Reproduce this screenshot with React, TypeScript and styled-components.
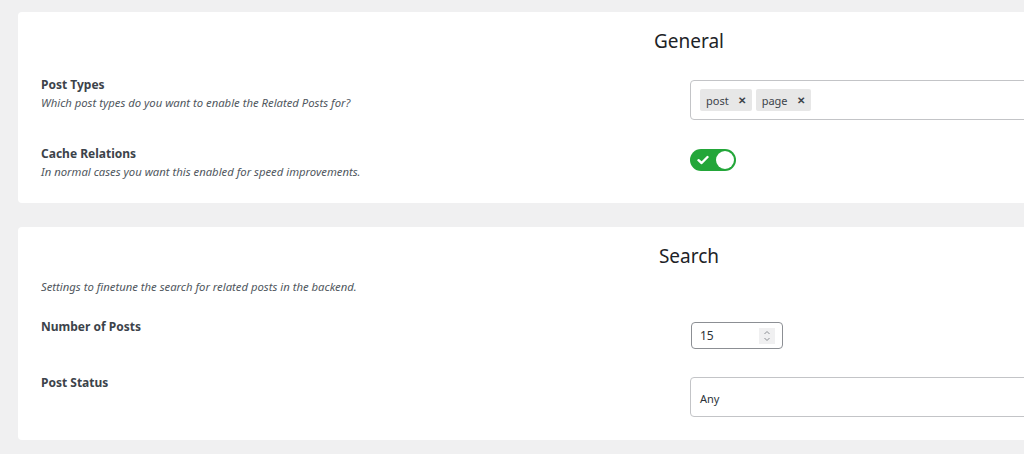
import React from "react"
import styled, { createGlobalStyle } from "styled-components"

const Global = createGlobalStyle`
  html, body {
    margin: 0;
    padding: 0;
    background: #f0f0f1;
    overflow: hidden;
  }
  body {
    font-family: "Noto Sans", "Open Sans", sans-serif;
    color: #3c434a;
  }
`

type Setting = {
  label?: string
  description?: string
  control: React.ReactNode
  top?: number
}

const Check = () => (
  <svg width="12" height="10" viewBox="0 0 12 10">
    <path d="M1.5 5.2 L4.6 8 L10.5 2" fill="none" stroke="#fff" strokeWidth="2.4" strokeLinecap="round" strokeLinejoin="round" />
  </svg>
)

const Spinner = () => (
  <svg width="10" height="14" viewBox="0 0 10 14">
    <path d="M2.5 5 L5 2.5 L7.5 5" fill="none" stroke="#8c8f94" strokeWidth="1" />
    <path d="M2.5 9 L5 11.5 L7.5 9" fill="none" stroke="#8c8f94" strokeWidth="1" />
  </svg>
)

const TagInput: React.FC<{ tags: string[] }> = ({ tags }) => (
  <S.Box>
    {tags.map((t) => (
      <S.Tag key={t}>
        {t}
        <S.TagRemove>✕</S.TagRemove>
      </S.Tag>
    ))}
  </S.Box>
)

const Toggle: React.FC<{ on: boolean }> = ({ on }) => (
  <S.Toggle $on={on}>
    <Check />
    <S.Knob />
  </S.Toggle>
)

const NumberInput: React.FC<{ value: number }> = ({ value }) => (
  <S.Number>
    <span>{value}</span>
    <S.Spin>
      <Spinner />
    </S.Spin>
  </S.Number>
)

const Row: React.FC<Setting> = ({ label, description, control, top = 4 }) => (
  <S.Row>
    <S.LabelCol>
      {label && <S.Label>{label}</S.Label>}
      {description && <S.Description>{description}</S.Description>}
    </S.LabelCol>
    <S.ControlCol $top={top}>{control}</S.ControlCol>
  </S.Row>
)

export default function App() {
  return (
    <>
      <Global />
      <S.Page>
        <S.Card $pad="15px 0 22px">
          <S.Title>General</S.Title>
          <S.Rows $top={21}>
            <Row
              label="Post Types"
              description="Which post types do you want to enable the Related Posts for?"
              control={<TagInput tags={["post", "page"]} />}
            />
            <Row
              label="Cache Relations"
              description="In normal cases you want this enabled for speed improvements."
              control={<Toggle on />}
            />
          </S.Rows>
        </S.Card>

        <S.Card $pad="15px 0 23px">
          <S.Title>Search</S.Title>
          <S.Intro>Settings to finetune the search for related posts in the backend.</S.Intro>
          <S.Rows $top={22}>
            <Row label="Number of Posts" control={<NumberInput value={15} />} />
            <Row label="Post Status" top={3} control={<S.Select>Any</S.Select>} />
          </S.Rows>
        </S.Card>
      </S.Page>
    </>
  )
}

const S = {
  Page: styled.div`
    display: flex;
    flex-direction: column;
    gap: 24px;
    padding: 12px 0 0 18px;
  `,
  Card: styled.section<{ $pad: string }>`
    width: 1342px;
    box-sizing: border-box;
    background: #fff;
    border-radius: 4px;
    padding: ${(p) => p.$pad};
  `,
  Title: styled.h2`
    margin: 0;
    text-align: center;
    font-size: 19px;
    font-weight: 400;
    line-height: 28px;
    color: #1d2327;
  `,
  Intro: styled.p`
    margin: 8px 0 0;
    padding-left: 23px;
    font-size: 11.3px;
    font-style: italic;
    line-height: 18px;
    color: #50575e;
  `,
  Rows: styled.div<{ $top: number }>`
    display: flex;
    flex-direction: column;
    gap: 25px;
    margin-top: ${(p) => p.$top}px;
  `,
  Row: styled.div`
    display: grid;
    grid-template-columns: 672px 1fr;
    align-items: start;
  `,
  LabelCol: styled.div`
    padding-left: 23px;
  `,
  Label: styled.div`
    font-size: 12px;
    font-weight: 700;
    line-height: 18px;
    color: #3c434a;
  `,
  Description: styled.div`
    font-size: 11.3px;
    font-style: italic;
    line-height: 18px;
    color: #50575e;
  `,
  ControlCol: styled.div<{ $top: number }>`
    padding-top: ${(p) => p.$top}px;
    display: flex;
  `,
  Box: styled.div`
    flex: 1;
    height: 40px;
    box-sizing: border-box;
    border: 1px solid #c3c4c7;
    border-radius: 4px;
    display: flex;
    align-items: center;
    gap: 4px;
    padding: 0 9px;
  `,
  Tag: styled.span`
    display: inline-flex;
    align-items: center;
    gap: 9px;
    height: 22px;
    padding: 0 6px;
    background: #e7e7e7;
    border-radius: 2px;
    font-size: 11px;
    color: #3c434a;
  `,
  TagRemove: styled.span`
    font-size: 10px;
    font-weight: 700;
    color: #3c434a;
  `,
  Toggle: styled.span<{ $on: boolean }>`
    width: 46px;
    height: 22px;
    box-sizing: border-box;
    border-radius: 11px;
    background: ${(p) => (p.$on ? "#23a639" : "#c3c4c7")};
    display: flex;
    align-items: center;
    justify-content: space-between;
    padding: 0 2px 0 7px;
  `,
  Knob: styled.span`
    width: 18px;
    height: 18px;
    border-radius: 50%;
    background: #fff;
  `,
  Number: styled.div`
    margin-left: 1px;
    width: 92px;
    height: 27px;
    box-sizing: border-box;
    border: 1px solid #8c8f94;
    border-radius: 4px;
    display: flex;
    align-items: center;
    justify-content: space-between;
    padding: 0 7px 0 8px;
    font-size: 12px;
    color: #2c3338;
  `,
  Spin: styled.span`
    width: 16px;
    height: 16px;
    background: #f0f0f1;
    display: flex;
    align-items: center;
    justify-content: center;
  `,
  Select: styled.div`
    flex: 1;
    height: 40px;
    box-sizing: border-box;
    border: 1px solid #c3c4c7;
    border-radius: 4px;
    display: flex;
    align-items: center;
    padding: 2px 9px 0;
    font-size: 11px;
    color: #2c3338;
  `,
}
